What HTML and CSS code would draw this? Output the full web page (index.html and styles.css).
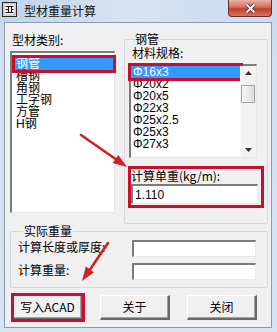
FILE: index.html
```html
<!DOCTYPE html>
<html>
<head>
<meta charset="utf-8">
<link rel="stylesheet" href="styles.css">
</head>
<body>
<div class="window">
  <div class="titlebar">
    <svg class="appicon" width="15" height="15" viewBox="0 0 15 15">
      <rect x="0.5" y="0.5" width="14" height="14" fill="#f4f4f4" stroke="#2a2a2a"/>
      <rect x="2" y="2" width="11" height="11" fill="#fff" stroke="#777" stroke-width="0.6"/>
      <path d="M3.5 4.5h8M3.5 7.5h3M3.5 10.5h8M6.5 4.5v6M9.5 4.5v6M9.5 7.5h2" stroke="#1a1a1a" stroke-width="1.1" fill="none"/>
    </svg>
    <span class="title">型材重量计算</span>
    <div class="close"><svg width="13" height="11" viewBox="0 0 13 11"><path d="M2.5 1.5l8 8M10.5 1.5l-8 8" stroke="#5a1a1a" stroke-width="3.4"/><path d="M2.5 1.5l8 8M10.5 1.5l-8 8" stroke="#fff" stroke-width="2"/></svg></div>
  </div>
  <div class="client">
    <div class="top">
      <div class="leftcol">
        <div class="lbl toplbl">型材类别:</div>
        <div class="listbox typelist">
          <div class="item sel hl">钢管</div>
          <div class="item">槽钢</div>
          <div class="item">角钢</div>
          <div class="item">工字钢</div>
          <div class="item">方管</div>
          <div class="item">H钢</div>
        </div>
      </div>
      <fieldset class="group rightgroup">
        <legend>钢管</legend>
        <div class="lbl speclbl">材料规格:</div>
        <div class="listbox speclist">
          <div class="items">
            <div class="item sel hl">Φ16x3</div>
            <div class="item">Φ20x2</div>
            <div class="item">Φ20x5</div>
            <div class="item">Φ22x3</div>
            <div class="item">Φ25x2.5</div>
            <div class="item">Φ25x3</div>
            <div class="item">Φ27x3</div>
          </div>
          <div class="scrollbar">
            <div class="sbtn"><svg width="7" height="4" viewBox="0 0 7 4"><path d="M0 4L3.5 0L7 4Z" fill="#333"/></svg></div>
            <div class="thumb"></div>
            <div class="track"></div>
            <div class="sbtn"><svg width="7" height="4" viewBox="0 0 7 4"><path d="M0 0L3.5 4L7 0Z" fill="#333"/></svg></div>
          </div>
        </div>
        <div class="unit hlbox">
          <div class="lbl unitlbl">计算单重(kg/m):</div>
          <div class="textbox">1.110</div>
        </div>
      </fieldset>
    </div>
    <fieldset class="group bottomgroup">
      <legend>实际重量</legend>
      <div class="row"><span class="lbl">计算长度或厚度:</span><div class="textbox"></div></div>
      <div class="row"><span class="lbl">计算重量:</span><div class="textbox"></div></div>
    </fieldset>
    <div class="buttons">
      <div class="btn hlbtn">写入ACAD</div>
      <div class="btn">关于</div>
      <div class="btn">关闭</div>
    </div>
  </div>
  <svg class="arrows" width="277" height="332" viewBox="0 0 277 332">
    <path d="M81 135L117 160" stroke="#d41f22" stroke-width="2.6" stroke-linecap="round"/>
    <path d="M127 167L112.7 163.1L118.3 154.9Z" fill="#d41f22"/>
    <path d="M108 243L89 271" stroke="#d41f22" stroke-width="2.6" stroke-linecap="round"/>
    <path d="M82 281L85.8 266.6L94 272.2Z" fill="#d41f22"/>
  </svg>
</div>
</body>
</html>
```

FILE: styles.css
```css
* { box-sizing: border-box; }
html, body { margin: 0; padding: 0; }
body {
  font-family: "Liberation Sans", "Noto Sans CJK SC", sans-serif;
  font-size: 12px;
  line-height: 12px;
  color: #000;
  background: #fff;
}
.window {
  position: relative;
  width: 277px;
  height: 332px;
  background: linear-gradient(#c6d7ea, #d2e0f0 60px, #d6e3f1);
  overflow: hidden;
}
.titlebar {
  height: 22px;
  display: flex;
  align-items: flex-start;
  padding-left: 2px;
  background: linear-gradient(90deg, #c0d3e9, #d6e3f1 45%, #cadbee);
}
.appicon { margin-top: 2px; flex: none; }
.title {
  margin-left: 7px;
  margin-top: 4px;
  font-family: "Noto Sans CJK SC", sans-serif;
  font-size: 12px;
  line-height: 13px;
  color: #111;
}
.close {
  margin-left: auto;
  margin-right: 5px;
  width: 44px;
  height: 17px;
  border: 1px solid #6a2b2b;
  border-top: none;
  border-radius: 0 0 4px 4px;
  background: linear-gradient(#e8b3a2, #d46e5c 45%, #c43c2c 55%, #d7745c);
  display: flex;
  align-items: center;
  justify-content: center;
}
.client {
  margin-left: 4px;
  width: 268px;
  height: 306px;
  background: #f0f0f0;
  border: 1px solid #8a9bb0;
  padding: 9px 0 0 5px;
}
.top {
  display: grid;
  grid-template-columns: 105px 144px;
  column-gap: 9px;
  align-items: start;
}
.lbl {
  font-family: "Noto Sans CJK SC", sans-serif;
  font-size: 12px;
  white-space: nowrap;
}
.toplbl { height: 19px; line-height: 16px; padding-left: 2px; }
.listbox {
  background: #fff;
  border-top: 2px solid #7b7b7b;
  border-left: 2px solid #7b7b7b;
  border-bottom: 1px solid #e6e6e6;
  border-right: 1px solid #e6e6e6;
}
.typelist {
  height: 162px;
  padding: 5px 1px 0 3px;
}
.item {
  height: 12px;
  line-height: 12px;
  padding-left: 1px;
  white-space: nowrap;
  font-family: "Liberation Sans", "Noto Sans CJK SC", sans-serif;
}
.item.sel { background: #3399ff; color: #fff; }
.hl { outline: 3px solid #c8102e; }
fieldset.group {
  margin: 0;
  border: 1px solid #d5d9dd;
  border-radius: 2px;
  min-width: 0;
}
legend {
  padding: 0 1px;
  line-height: 14px;
  font-family: "Noto Sans CJK SC", sans-serif;
  font-size: 12px;
}
.rightgroup {
  width: 144px;
  height: 192px;
  margin-top: 1px;
  padding: 0 0 0 4px;
}
.rightgroup legend { margin-left: 5px; }
.speclbl { height: 18px; line-height: 14px; padding-left: 3px; }
.speclist {
  display: flex;
  height: 94px;
  width: 128px;
}
.speclist .items { flex: 1; padding-left: 0; }
.speclist .item { padding-left: 2px; }
.scrollbar {
  width: 16px;
  display: flex;
  flex-direction: column;
  background: #f2f2f2;
  border-left: 1px solid #f8f8f8;
}
.sbtn {
  height: 14px;
  display: flex;
  align-items: center;
  justify-content: center;
}
.thumb {
  height: 18px;
  margin: 5px 1px 0 0;
  border: 1px solid #a0a0a0;
  border-radius: 1px;
  background: linear-gradient(90deg, #f6f6f6, #dedede);
}
.track { flex: 1; }
.unit {
  margin-top: 11px;
  width: 130px;
  margin-left: 2px;
  height: 36px;
}
.hlbox { outline: 3px solid #c8102e; }
.unitlbl { height: 15px; line-height: 14px; }
.textbox {
  background: #fff;
  border-top: 2px solid #7b7b7b;
  border-left: 2px solid #7b7b7b;
  border-bottom: 1px solid #e8e8e8;
  border-right: 1px solid #e8e8e8;
  height: 20px;
  padding: 3px 2px 0;
  font-family: "Liberation Sans", sans-serif;
  font-size: 12px;
  line-height: 13px;
}
.unit .textbox { width: 127px; }
.bottomgroup {
  margin-top: 8px;
  width: 258px;
  height: 64px;
  padding: 0 11px 0 7px;
}
.bottomgroup legend { margin-left: 5px; }
.row {
  display: flex;
  align-items: flex-start;
  height: 23px;
  padding-top: 2px;
}
.row .lbl { line-height: 14px; margin-top: 0px; }
.row .textbox { width: 124px; height: 17px; margin-left: auto; }
.buttons {
  display: flex;
  margin-top: 7px;
  padding-left: 3px;
  gap: 17px;
}
.btn {
  width: 70px;
  height: 25px;
  display: flex;
  align-items: center;
  justify-content: center;
  border-top: 1px solid #ffffff;
  border-left: 1px solid #ffffff;
  border-right: 2px solid #696969;
  border-bottom: 2px solid #696969;
  box-shadow: inset -1px -1px 0 #a0a0a0;
  background: #f0f0f0;
  font-family: "Noto Sans CJK SC", "Liberation Sans", sans-serif;
  font-size: 12px;
}
.hlbtn { outline: 3px solid #c8102e; outline-offset: -1px; }
.arrows { position: absolute; left: 0; top: 0; pointer-events: none; }
```
